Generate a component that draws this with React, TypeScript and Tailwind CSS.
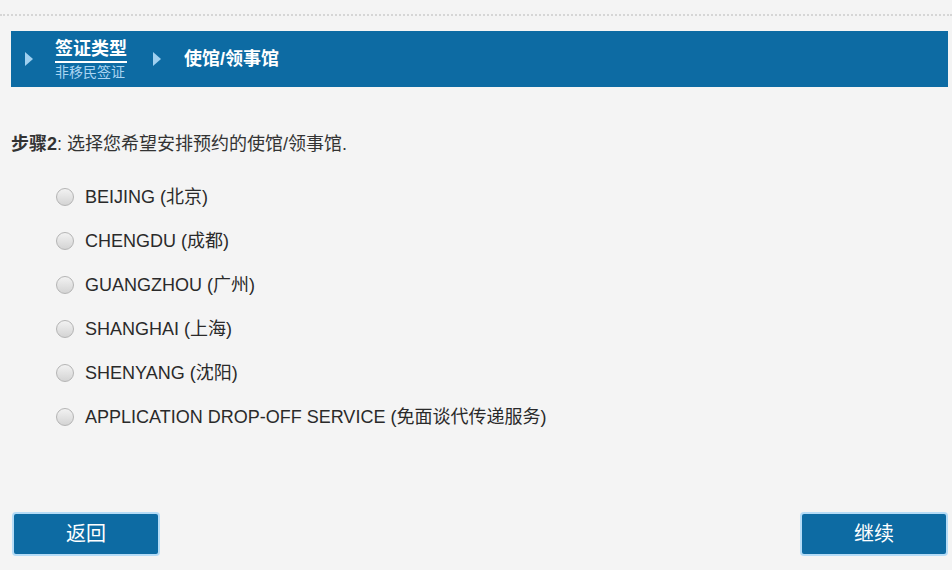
const options = [
  "BEIJING (北京)",
  "CHENGDU (成都)",
  "GUANGZHOU (广州)",
  "SHANGHAI (上海)",
  "SHENYANG (沈阳)",
  "APPLICATION DROP-OFF SERVICE (免面谈代传递服务)",
];

const Arrow = () => (
  <svg width="8" height="14" viewBox="0 0 8 14" className="shrink-0">
    <polygon points="0,0 8,7 0,14" fill="#9fd0f0" />
  </svg>
);

const App = () => {
  return (
    <div
      className="h-[570px] w-[952px] overflow-hidden bg-[#f4f4f4] text-[#333]"
      style={{ fontFamily: '"Liberation Sans", Arial, "Noto Sans CJK SC", sans-serif' }}
    >
      <div className="pt-[14px]">
        <div className="h-0 border-t-2 border-dotted border-[#d6d6d6]" />
      </div>

      {/* breadcrumb bar */}
      <div className="ml-[11px] mr-[4px] mt-[15px] flex h-[56px] items-center bg-[#0d6ba3]">
        <div className="ml-[14px]">
          <Arrow />
        </div>
        <div className="ml-[22px] flex flex-col">
          <span className="border-b-2 border-white pb-[1px] text-[18px] leading-[21px] font-bold text-white">
            签证类型
          </span>
          <span className="mt-[1px] text-[14px] leading-[16px] text-[#a9d4f2]">非移民签证</span>
        </div>
        <div className="ml-[26px]">
          <Arrow />
        </div>
        <span className="ml-[23px] text-[18px] font-bold text-white">使馆/领事馆</span>
      </div>

      <p className="mt-[45px] ml-[11px] text-[18px] leading-[24px]">
        <b>步骤2</b>: 选择您希望安排预约的使馆/领事馆.
      </p>

      <div className="mt-[32px] ml-[56px] flex flex-col gap-[26px]">
        {options.map((o) => (
          <label key={o} className="flex h-[18px] items-center gap-[11px] text-[18px]">
            <span className="h-[18px] w-[18px] shrink-0 rounded-full border border-[#b4b4b4] bg-gradient-to-b from-[#f2f2f2] to-[#d4d4d4]" />
            <span className="text-[#2a2a2a]">{o}</span>
          </label>
        ))}
      </div>

      <div className="mt-[86px] flex justify-between pl-[12px] pr-[4px]">
        <button className="h-[44px] w-[148px] rounded-[4px] border-2 border-[#b5dcf7] bg-[#0d6ba3] text-[20px] text-white">
          返回
        </button>
        <button className="h-[44px] w-[148px] rounded-[4px] border-2 border-[#b5dcf7] bg-[#0d6ba3] text-[20px] text-white">
          继续
        </button>
      </div>
    </div>
  );
};

export default App;
